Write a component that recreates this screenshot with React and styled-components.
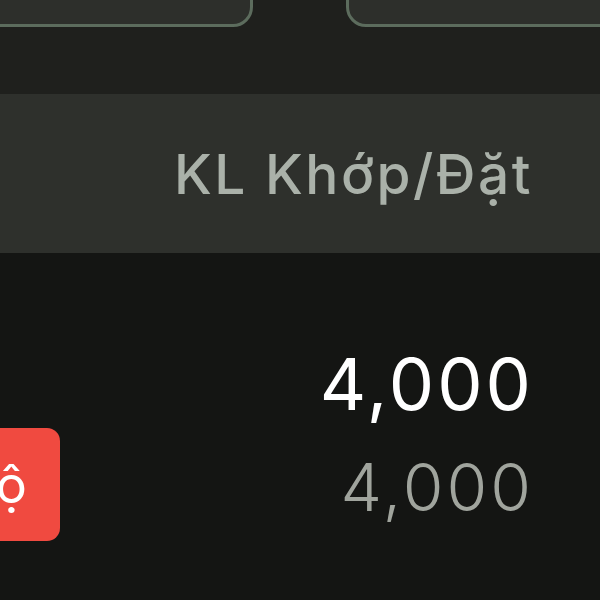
import React from "react";
import styled, { createGlobalStyle } from "styled-components";

const GlobalStyle = createGlobalStyle`
  html, body {
    margin: 0;
    padding: 0;
    background: #141513;
    width: 600px;
    height: 600px;
    overflow: hidden;
    font-family: Inter, "Noto Sans", sans-serif;
  }
`;

const Screen = styled.div`
  width: 600px;
  height: 600px;
  display: flex;
  flex-direction: column;
  overflow: hidden;
  background: #141513;
`;

const TopArea = styled.div`
  height: 94px;
  background: #1f201d;
  display: flex;
  align-items: flex-start;
  justify-content: space-between;
`;

const TabButton = styled.div`
  width: ${(p) => p.width}px;
  height: 60px;
  margin-top: -33px;
  box-sizing: border-box;
  background: #2d2f2b;
  border: 3px solid #5c6c5d;
  border-radius: 20px;
  margin-left: ${(p) => (p.side === "left" ? "-20px" : "0")};
  margin-right: ${(p) => (p.side === "right" ? "-20px" : "0")};
`;

const HeaderBand = styled.div`
  height: 159px;
  background: #2e302c;
  display: flex;
  align-items: center;
  justify-content: flex-end;
  padding-right: 67px;
`;

const HeaderLabel = styled.span`
  font-size: 55px;
  font-weight: 500;
  color: #aab1a9;
  letter-spacing: 2.5px;
`;

const Body = styled.div`
  flex: 1;
  display: flex;
  flex-direction: column;
  padding-top: 78px;
  position: relative;
`;

const QtyRow = styled.div`
  height: ${(p) => p.h}px;
  display: flex;
  align-items: center;
  justify-content: flex-end;
  padding-right: 69px;
`;

const Qty = styled.span`
  font-size: ${(p) => (p.muted ? 66 : 72)}px;
  font-weight: ${(p) => (p.muted ? 300 : 400)};
  color: ${(p) => (p.muted ? "#a0a49d" : "#ffffff")};
  letter-spacing: 3px;
  margin-right: -3px;
  line-height: 1;
`;

const StatusBadge = styled.div`
  position: absolute;
  left: -60px;
  top: 175px;
  width: 120px;
  height: 113px;
  background: #f04a40;
  border-radius: 13px;
  display: flex;
  align-items: center;
  justify-content: flex-end;
  padding-right: 33px;
  box-sizing: border-box;
  color: #ffffff;
  font-size: 52px;
  font-weight: 400;
`;

export default function App() {
  return (
    <>
      <GlobalStyle />
      <Screen>
        <TopArea>
          <TabButton side="left" width={273} />
          <TabButton side="right" width={274} />
        </TopArea>
        <HeaderBand>
          <HeaderLabel>KL Khớp/Đặt</HeaderLabel>
        </HeaderBand>
        <Body>
          <StatusBadge>ộ</StatusBadge>
          <QtyRow h={106}>
            <Qty>4,000</Qty>
          </QtyRow>
          <QtyRow h={100}>
            <Qty muted>4,000</Qty>
          </QtyRow>
        </Body>
      </Screen>
    </>
  );
}
